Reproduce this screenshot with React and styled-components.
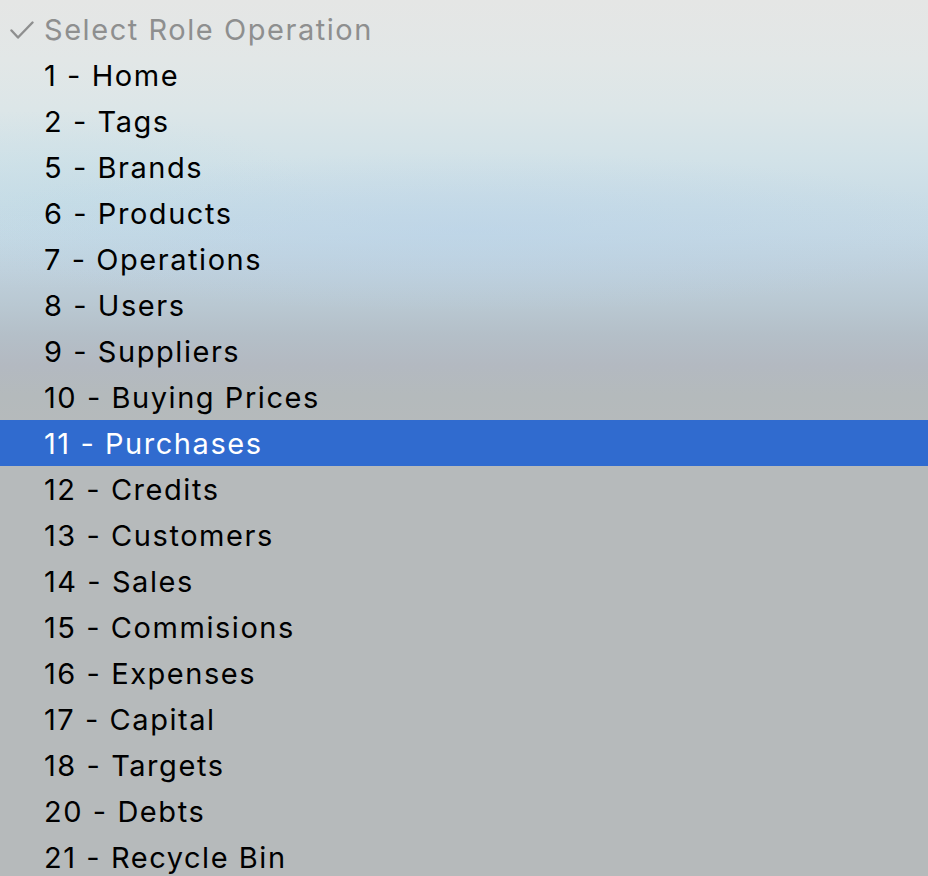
import React from "react";
import styled, { createGlobalStyle } from "styled-components";

const Global = createGlobalStyle`
  html, body { margin: 0; padding: 0; overflow: hidden; }
  body { font-family: Inter, "Noto Sans", sans-serif; }
`;

const Menu = styled.div`
  width: 928px;
  height: 876px;
  overflow: hidden;
  box-sizing: border-box;
  padding-top: 6px;
  display: flex;
  flex-direction: column;
  background:
    radial-gradient(ellipse 520px 80px at 470px 232px, rgba(184, 211, 234, 0.5), rgba(184, 211, 234, 0) 100%),
    radial-gradient(ellipse 260px 90px at 60px 200px, rgba(190, 220, 230, 0.35), rgba(190, 220, 230, 0) 100%),
    linear-gradient(
      to bottom,
      #e5e6e5 0px,
      #e2e7e7 60px,
      #dce6e8 110px,
      #d2e2e8 160px,
      #c9dce6 205px,
      #c5d8e4 235px,
      #bfd0dc 270px,
      #b9c8d2 305px,
      #b4bfc8 335px,
      #b3b9c1 365px,
      #b4babc 395px,
      #b6babb 440px,
      #b6babb 100%
    );
`;

const Item = styled.div`
  flex: 0 0 46px;
  height: 46px;
  box-sizing: border-box;
  padding-top: 2px;
  display: grid;
  grid-template-columns: 44px 1fr;
  align-items: center;
  font-size: 29px;
  line-height: 44px;
  letter-spacing: 1.55px;
  white-space: nowrap;
  color: ${(p) => (p.$header ? "#8e8f8f" : p.$selected ? "#ffffff" : "#000000")};
  background: ${(p) => (p.$selected ? "#306bcf" : "transparent")};
`;

const Gutter = styled.span`
  display: flex;
  align-items: center;
  justify-content: flex-start;
  padding-left: 10px;
`;

const Label = styled.span``;

const Check = () => (
  <svg width="24" height="18" viewBox="0 0 24 18" fill="none">
    <path d="M1.5 9.5 L8 16.5 L22.5 1.5" stroke="#8e8f8f" strokeWidth="2.4" strokeLinecap="round" strokeLinejoin="round" />
  </svg>
);

const items = [
  "1 - Home",
  "2 - Tags",
  "5 - Brands",
  "6 - Products",
  "7 - Operations",
  "8 - Users",
  "9 - Suppliers",
  "10 - Buying Prices",
  "11 - Purchases",
  "12 - Credits",
  "13 - Customers",
  "14 - Sales",
  "15 - Commisions",
  "16 - Expenses",
  "17 - Capital",
  "18 - Targets",
  "20 - Debts",
  "21 - Recycle Bin",
];

export default function App() {
  return (
    <>
      <Global />
      <Menu>
        <Item $header>
          <Gutter>
            <Check />
          </Gutter>
          <Label>Select Role Operation</Label>
        </Item>
        {items.map((t) => (
          <Item key={t} $selected={t === "11 - Purchases"}>
            <Gutter />
            <Label>{t}</Label>
          </Item>
        ))}
      </Menu>
    </>
  );
}
